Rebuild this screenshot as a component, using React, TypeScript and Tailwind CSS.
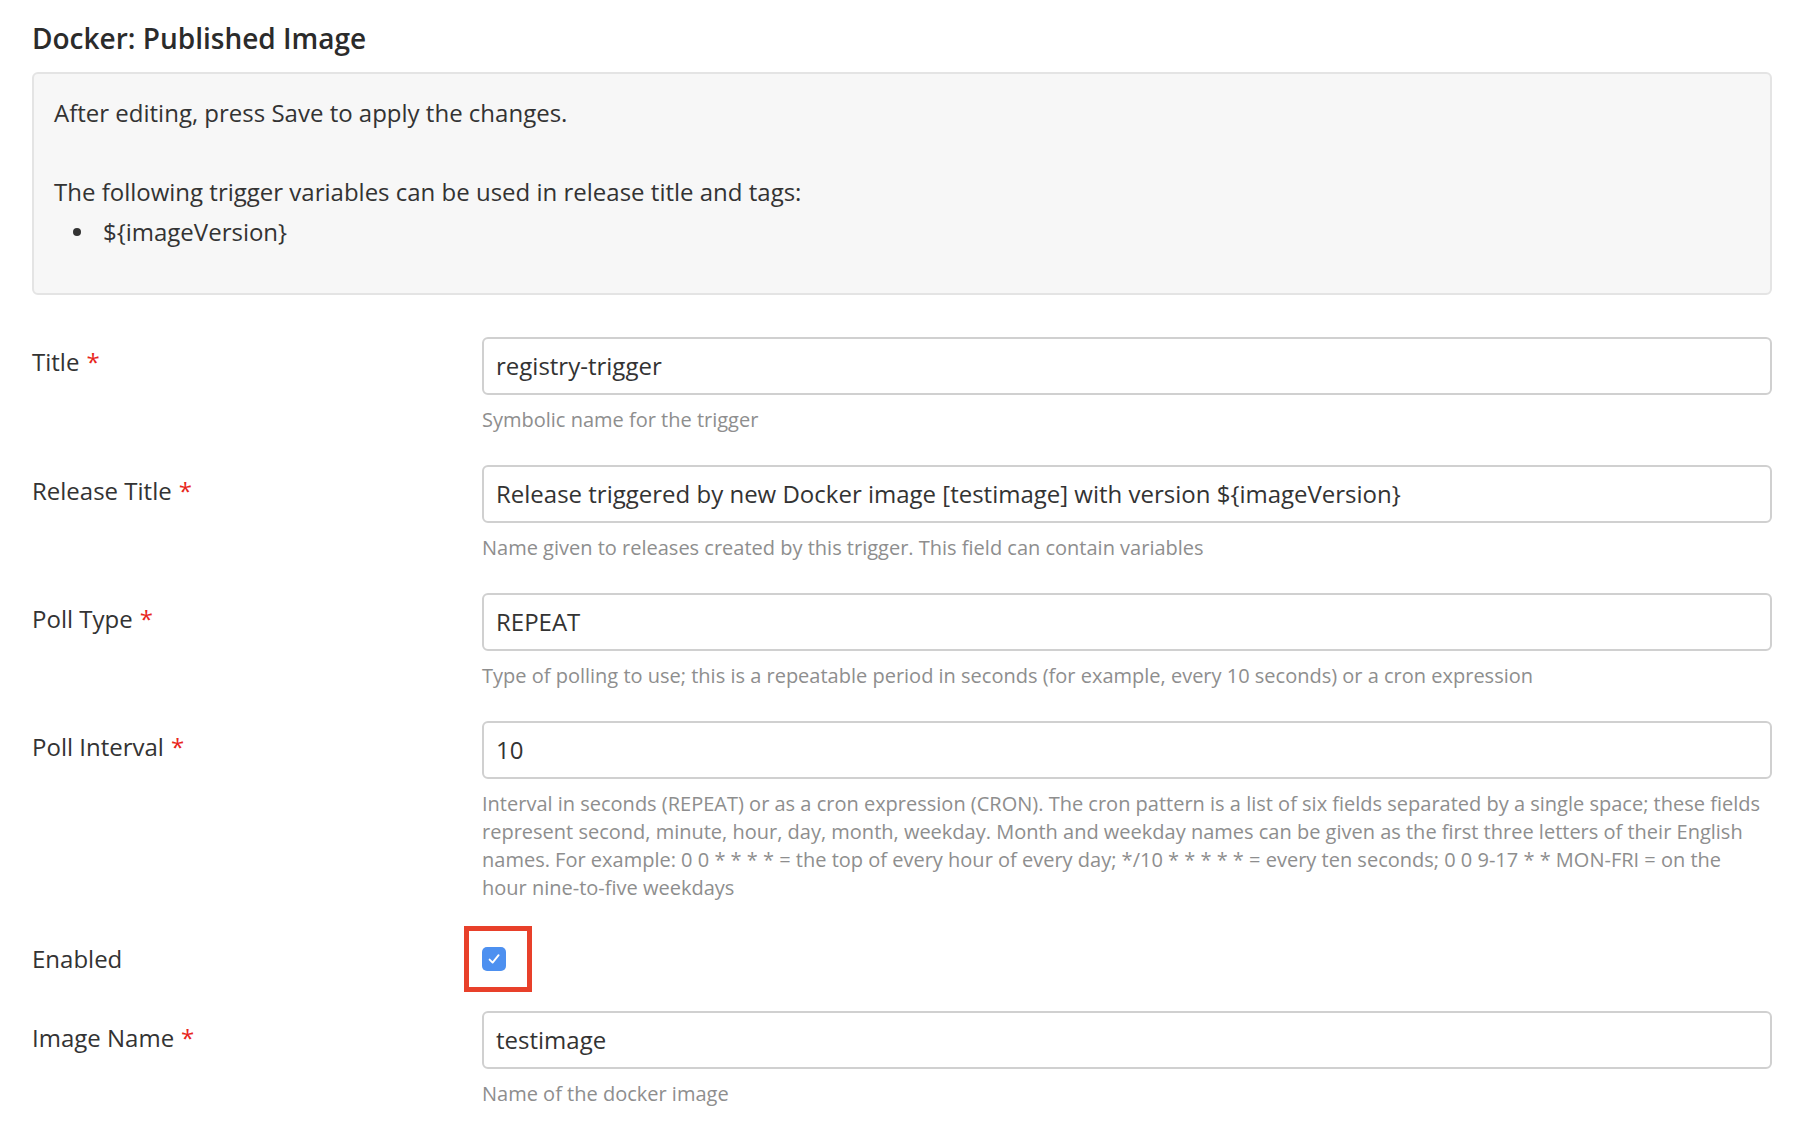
import React from "react";

const font = { fontFamily: '"Open Sans", "Noto Sans", sans-serif' };

function Label({ text, required, pt = "pt-[11px]" }: { text: string; required?: boolean; pt?: string }) {
  return (
    <div className={`w-[450px] shrink-0 text-[24px] leading-[30px] text-[#333] ${pt}`}>
      {text}
      {required && <span className="text-[#e8261c] ml-[7px]">*</span>}
    </div>
  );
}

function Field({
  label,
  value,
  help,
  pt,
}: {
  label: string;
  value: string;
  help: React.ReactNode;
  pt?: string;
}) {
  return (
    <div className="flex mb-[31px]">
      <Label text={label} required pt={pt} />
      <div className="flex-1 min-w-0">
        <div className="h-[58px] border-2 border-[#d0d0d0] rounded-[6px] bg-white flex items-center px-[12px] text-[24px] text-[#333]">
          {value}
        </div>
        <div className="mt-[11px] text-[20px] leading-[28px] text-[#8e8e8e]">{help}</div>
      </div>
    </div>
  );
}

export default function App() {
  return (
    <div className="min-h-[1130px] bg-white px-[32px] pt-[23px]" style={font}>
      <h1 className="text-[28px] leading-[30px] font-semibold text-[#2b2b2b] mb-[19px]">
        Docker: Published Image
      </h1>
      <div className="border-2 border-[#e4e4e4] bg-[#f7f7f7] rounded-[6px] pl-[20px] pr-[20px] pt-[24px] pb-[46px] text-[24px] leading-[30px] text-[#333]">
        <p className="mb-[49px]">After editing, press Save to apply the changes.</p>
        <p className="mb-[10px]">The following trigger variables can be used in release title and tags:</p>
        <div className="flex items-center">
          <span className="ml-[19px] w-[8px] h-[8px] rounded-full bg-[#333] mr-[22px]" />
          <span>{"${imageVersion}"}</span>
        </div>
      </div>

      <div className="mt-[42px]">
        <Field label="Title" value="registry-trigger" help="Symbolic name for the trigger" pt="pt-[10px]" />
        <Field
          label="Release Title"
          value="Release triggered by new Docker image [testimage] with version ${imageVersion}"
          help="Name given to releases created by this trigger. This field can contain variables"
        />
        <Field
          label="Poll Type"
          value="REPEAT"
          help="Type of polling to use; this is a repeatable period in seconds (for example, every 10 seconds) or a cron expression"
        />
        <Field
          label="Poll Interval"
          value="10"
          help={
            <>
              Interval in seconds (REPEAT) or as a cron expression (CRON). The cron pattern is a list of six fields separated by a single space; these fields
              <br />
              represent second, minute, hour, day, month, weekday. Month and weekday names can be given as the first three letters of their English
              <br />
              names. For example: 0 0 * * * * = the top of every hour of every day; */10 * * * * * = every ten seconds; 0 0 9-17 * * MON-FRI = on the
              <br />
              hour nine-to-five weekdays
            </>
          }
        />

        <div className="flex items-center h-[52px] mb-[26px]">
          <div className="w-[450px] shrink-0 text-[24px] leading-[30px] text-[#333]">Enabled</div>
          <div className="relative">
            <div className="w-[24px] h-[24px] rounded-[5px] bg-[#4d90f0] flex items-center justify-center">
              <svg width="16" height="16" viewBox="0 0 16 16" fill="none">
                <path d="M3.6 8.6 L6.6 11.6 L12.6 4.2" stroke="white" strokeWidth="1.9" strokeLinecap="round" strokeLinejoin="round" />
              </svg>
            </div>
            <div className="absolute -left-[18px] -top-[21px] w-[68px] h-[66px] border-[5px] border-[#e8402a]" />
          </div>
        </div>

        <Field label="Image Name" value="testimage" help="Name of the docker image" pt="pt-[12px]" />
      </div>
    </div>
  );
}
